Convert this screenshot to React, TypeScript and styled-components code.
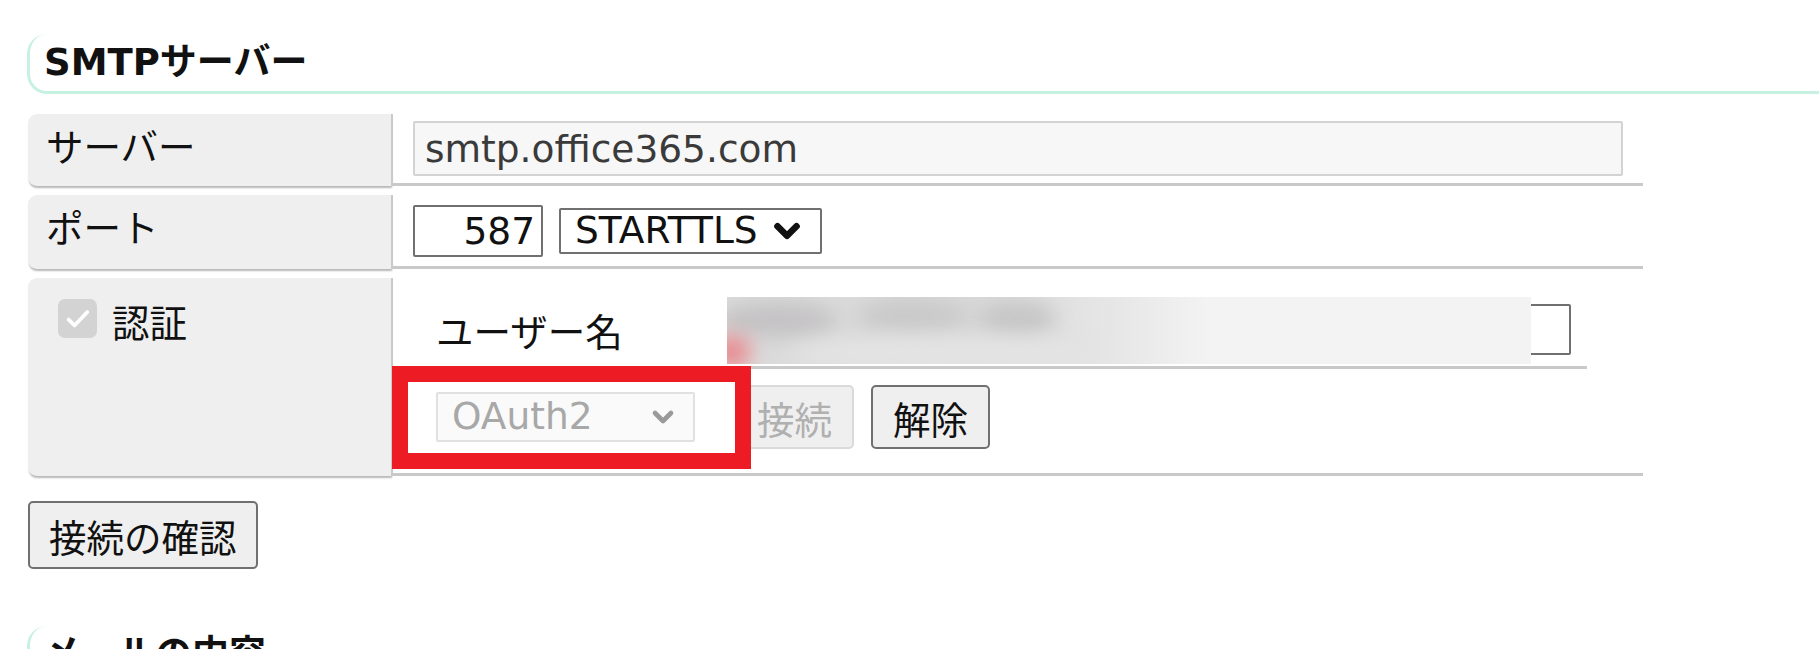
import styled, { createGlobalStyle } from 'styled-components'
import { ChevronDown } from 'lucide-react'

const GlobalStyle = createGlobalStyle`
  html,
  body {
    margin: 0;
    background: #ffffff;
  }
  body {
    font-family: 'DejaVu Sans', 'Noto Sans CJK JP', sans-serif;
    font-size: 37.5px;
    color: #111111;
  }
`

const Page = styled.div`
  box-sizing: border-box;
  height: 649px;
  overflow: hidden;
  padding: 34px 0 0 27px;
`

const SectionTitle = styled.h2`
  margin: 0;
  padding-left: 14px;
  font-size: 37px;
  font-weight: bold;
  line-height: 57px;
  border-left: 3px solid #c8f1e2;
  border-bottom: 3px solid #c8f1e2;
  border-radius: 20px 0 0 20px;
`

const SettingsTable = styled.div`
  display: flex;
  flex-direction: column;
  gap: 9px;
  width: 1615px;
  margin: 20px 0 0 1px;
`

const Row = styled.div<{ $height?: number }>`
  display: grid;
  grid-template-columns: 365px 1250px;
  height: ${({ $height }) => ($height ? `${$height}px` : 'auto')};
`

const LabelCell = styled.div<{ $top?: number }>`
  box-sizing: border-box;
  display: flex;
  align-items: flex-start;
  gap: 15px;
  padding: ${({ $top }) => $top ?? 9}px 18px 0;
  background: #efefef;
  border-right: 2px solid #c9c9c9;
  border-radius: 9px 0 0 9px;
  box-shadow: 0 3px 2px -1px #b8b8b8;
  line-height: 50px;
  white-space: nowrap;
`

const ValueCell = styled.div`
  box-sizing: border-box;
  display: flex;
  align-items: center;
  gap: 16px;
  padding: 0 20px;
  border-bottom: 3px solid #c9c9c9;
`

const NestedCell = styled.div`
  display: flex;
  flex-direction: column;
  border-bottom: 3px solid #c9c9c9;
`

const TextInput = styled.input<{ $readonly?: boolean; $width: number; $height: number; $align?: string }>`
  box-sizing: border-box;
  width: ${({ $width }) => $width}px;
  height: ${({ $height }) => $height}px;
  padding: 0 ${({ $align }) => ($align === 'right' ? '6px' : '10px')};
  font: inherit;
  text-align: ${({ $align }) => $align ?? 'left'};
  color: ${({ $readonly }) => ($readonly ? '#3a3a3a' : '#111111')};
  background: ${({ $readonly }) => ($readonly ? '#f7f7f7' : '#ffffff')};
  border: 2px solid ${({ $readonly }) => ($readonly ? '#d3d3d3' : '#707070')};
  border-radius: 2px;
  outline: none;
`

const SelectBox = styled.div<{ $disabled?: boolean; $width: number; $height: number }>`
  box-sizing: border-box;
  display: flex;
  align-items: center;
  justify-content: space-between;
  width: ${({ $width }) => $width}px;
  height: ${({ $height }) => $height}px;
  padding: 0 14px;
  color: ${({ $disabled }) => ($disabled ? '#a8a8a8' : '#111111')};
  background: ${({ $disabled }) => ($disabled ? '#fafafa' : '#ffffff')};
  border: 2px solid ${({ $disabled }) => ($disabled ? '#e1e1e1' : '#707070')};
  border-radius: 2px;
  line-height: 1;
`

const Button = styled.button<{ $disabled?: boolean }>`
  box-sizing: border-box;
  height: 64px;
  padding: 0 20px;
  font: inherit;
  color: ${({ $disabled }) => ($disabled ? '#b0b0b0' : '#111111')};
  background: #efefef;
  border: 2px solid ${({ $disabled }) => ($disabled ? '#dadada' : '#707070')};
  border-radius: 5px;
`

const CheckMark = styled.span`
  display: inline-flex;
  align-items: center;
  justify-content: center;
  flex: none;
  width: 39px;
  height: 39px;
  margin-left: 12px;
  background: #d3d3d3;
  border-radius: 7px;
`

const UserRow = styled.div`
  box-sizing: border-box;
  display: flex;
  align-items: center;
  width: 1194px;
  height: 91px;
  padding-top: 14px;
  border-bottom: 3px solid #c9c9c9;
`

const UserLabel = styled.div`
  box-sizing: border-box;
  width: 334px;
  padding-left: 43px;
`

const UserField = styled.div`
  position: relative;
  display: flex;
`

// blurred-out user name, laid over the input
const Redaction = styled.div`
  position: absolute;
  left: 0;
  top: -7px;
  width: 804px;
  height: 67px;
  overflow: hidden;
  background: linear-gradient(90deg, #dcdcdc 0%, #d9d9d9 30%, #e6e6e6 48%, #f3f3f3 60%, #f3f3f3 100%);
`

const Blob = styled.span<{ $x: number; $y: number; $w: number; $c: string }>`
  position: absolute;
  left: ${({ $x }) => $x}px;
  top: ${({ $y }) => $y}px;
  width: ${({ $w }) => $w}px;
  height: 34px;
  border-radius: 50%;
  background: ${({ $c }) => $c};
  filter: blur(10px);
`

const AuthRow = styled.div`
  position: relative;
  display: flex;
  align-items: center;
  height: 104px;
  padding: 0 0 8px 43px;
  box-sizing: border-box;
`

// red highlight frame drawn on the screenshot
const Annotation = styled.div`
  position: absolute;
  left: -1px;
  top: -3px;
  width: 359px;
  height: 103px;
  box-sizing: border-box;
  border: 16px solid #ed1c24;
  pointer-events: none;
`

const Actions = styled.div`
  display: flex;
  gap: 17px;
  margin-left: 40px;
`

const ConfirmButton = styled(Button)`
  height: 68px;
  margin: 25px 0 0 1px;
  padding: 0 19px;
`

const NextTitle = styled(SectionTitle)`
  margin-top: 57px;
`

const App = () => {
  return (
    <>
      <GlobalStyle />
      <Page>
        <SectionTitle>SMTPサーバー</SectionTitle>

        <SettingsTable>
          <Row $height={72}>
            <LabelCell>サーバー</LabelCell>
            <ValueCell>
              <TextInput $readonly $width={1210} $height={55} value="smtp.office365.com" readOnly />
            </ValueCell>
          </Row>

          <Row $height={74}>
            <LabelCell>ポート</LabelCell>
            <ValueCell>
              <TextInput $width={130} $height={52} $align="right" value="587" readOnly />
              <SelectBox $width={263} $height={46}>
                STARTTLS
                <ChevronDown size={38} strokeWidth={4.2} color="#111" />
              </SelectBox>
            </ValueCell>
          </Row>

          <Row>
            <LabelCell $top={21}>
              <CheckMark>
                <svg width="28" height="28" viewBox="0 0 24 24" fill="none">
                  <path d="M4 12.5l5 5L20 6" stroke="#ffffff" strokeWidth="3.2" strokeLinecap="round" strokeLinejoin="round" />
                </svg>
              </CheckMark>
              認証
            </LabelCell>
            <NestedCell>
              <UserRow>
                <UserLabel>ユーザー名</UserLabel>
                <UserField>
                  <TextInput $width={844} $height={51} value="" readOnly />
                  <Redaction>
                    <Blob $x={-10} $y={6} $w={120} $c="#c4c2c4" />
                    <Blob $x={130} $y={2} $w={110} $c="#c9c9c9" />
                    <Blob $x={250} $y={4} $w={80} $c="#c6c6c6" />
                    <Blob $x={-16} $y={38} $w={40} $c="#e88a8e" />
                    <Blob $x={60} $y={40} $w={300} $c="#e4e4e4" />
                  </Redaction>
                </UserField>
              </UserRow>
              <AuthRow>
                <SelectBox $disabled $width={259} $height={50}>
                  OAuth2
                  <ChevronDown size={32} strokeWidth={3.5} color="#9a9a9a" />
                </SelectBox>
                <Actions>
                  <Button $disabled>接続</Button>
                  <Button>解除</Button>
                </Actions>
                <Annotation />
              </AuthRow>
            </NestedCell>
          </Row>
        </SettingsTable>

        <ConfirmButton>接続の確認</ConfirmButton>

        <NextTitle>メールの内容</NextTitle>
      </Page>
    </>
  )
}

export default App
